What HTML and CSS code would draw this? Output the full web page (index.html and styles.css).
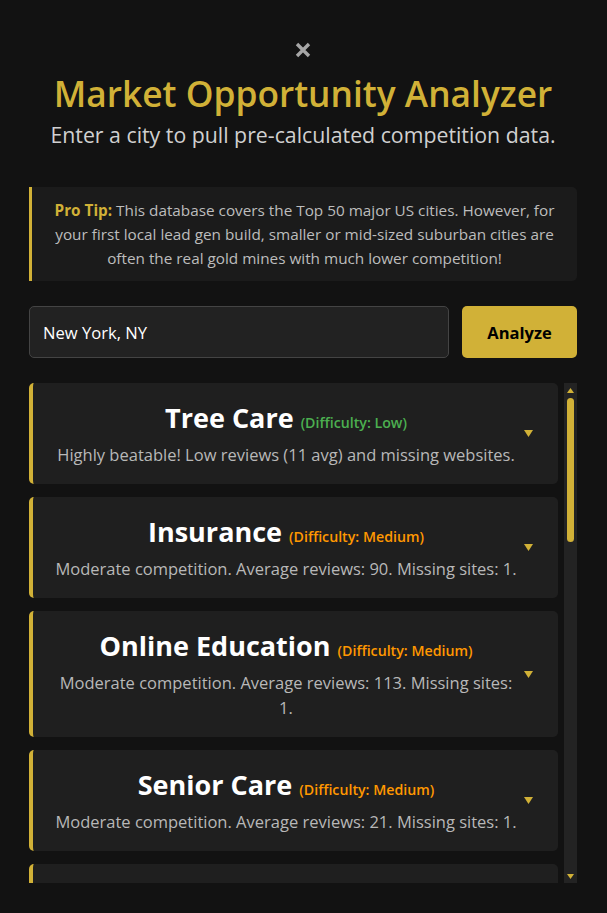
FILE: index.html
```html
<!DOCTYPE html>
<html lang="en">
<head>
<meta charset="utf-8">
<title>Market Opportunity Analyzer</title>
<link rel="stylesheet" href="styles.css">
</head>
<body>
<div class="modal">
  <button class="close" aria-label="Close">
    <svg viewBox="0 0 16 16" width="16" height="16"><path d="M2 2 L14 14 M14 2 L2 14" stroke="#a6a6a6" stroke-width="3.4" fill="none"/></svg>
  </button>
  <h1 class="title">Market Opportunity Analyzer</h1>
  <p class="subtitle">Enter a city to pull pre-calculated competition data.</p>

  <div class="tip">
    <strong class="tip-label">Pro Tip:</strong> This database covers the Top 50 major US cities. However, for your first local lead gen build, smaller or mid-sized suburban cities are often the real gold mines with much lower competition!
  </div>

  <div class="search">
    <input class="city-input" type="text" value="New York, NY">
    <button class="analyze">Analyze</button>
  </div>

  <div class="results-wrap">
    <div class="results">
      <div class="card">
        <div class="card-body">
          <h3 class="niche">Tree Care <span class="diff low">(Difficulty: Low)</span></h3>
          <p class="desc">Highly beatable! Low reviews (11 avg) and missing websites.</p>
        </div>
        <svg class="arrow" viewBox="0 0 9 7" width="9" height="7"><polygon points="0,0 9,0 4.5,7" fill="#d1b137"/></svg>
      </div>
      <div class="card">
        <div class="card-body">
          <h3 class="niche">Insurance <span class="diff medium">(Difficulty: Medium)</span></h3>
          <p class="desc">Moderate competition. Average reviews: 90. Missing sites: 1.</p>
        </div>
        <svg class="arrow" viewBox="0 0 9 7" width="9" height="7"><polygon points="0,0 9,0 4.5,7" fill="#d1b137"/></svg>
      </div>
      <div class="card">
        <div class="card-body">
          <h3 class="niche">Online Education <span class="diff medium">(Difficulty: Medium)</span></h3>
          <p class="desc">Moderate competition. Average reviews: 113. Missing sites: 1.</p>
        </div>
        <svg class="arrow" viewBox="0 0 9 7" width="9" height="7"><polygon points="0,0 9,0 4.5,7" fill="#d1b137"/></svg>
      </div>
      <div class="card">
        <div class="card-body">
          <h3 class="niche">Senior Care <span class="diff medium">(Difficulty: Medium)</span></h3>
          <p class="desc">Moderate competition. Average reviews: 21. Missing sites: 1.</p>
        </div>
        <svg class="arrow" viewBox="0 0 9 7" width="9" height="7"><polygon points="0,0 9,0 4.5,7" fill="#d1b137"/></svg>
      </div>
      <div class="card">
        <div class="card-body">
          <h3 class="niche">Pest Control <span class="diff medium">(Difficulty: Medium)</span></h3>
          <p class="desc">Moderate competition. Average reviews: 64. Missing sites: 2.</p>
        </div>
        <svg class="arrow" viewBox="0 0 9 7" width="9" height="7"><polygon points="0,0 9,0 4.5,7" fill="#d1b137"/></svg>
      </div>
      <div class="card">
        <div class="card-body">
          <h3 class="niche">Pool Cleaning <span class="diff low">(Difficulty: Low)</span></h3>
          <p class="desc">Highly beatable! Low reviews (18 avg) and missing websites.</p>
        </div>
        <svg class="arrow" viewBox="0 0 9 7" width="9" height="7"><polygon points="0,0 9,0 4.5,7" fill="#d1b137"/></svg>
      </div>
      <div class="card">
        <div class="card-body">
          <h3 class="niche">Roofing <span class="diff medium">(Difficulty: Medium)</span></h3>
          <p class="desc">Moderate competition. Average reviews: 87. Missing sites: 1.</p>
        </div>
        <svg class="arrow" viewBox="0 0 9 7" width="9" height="7"><polygon points="0,0 9,0 4.5,7" fill="#d1b137"/></svg>
      </div>
      <div class="card">
        <div class="card-body">
          <h3 class="niche">Landscaping <span class="diff low">(Difficulty: Low)</span></h3>
          <p class="desc">Highly beatable! Low reviews (24 avg) and missing websites.</p>
        </div>
        <svg class="arrow" viewBox="0 0 9 7" width="9" height="7"><polygon points="0,0 9,0 4.5,7" fill="#d1b137"/></svg>
      </div>
      <div class="card">
        <div class="card-body">
          <h3 class="niche">Plumbing <span class="diff medium">(Difficulty: Medium)</span></h3>
          <p class="desc">Moderate competition. Average reviews: 95. Missing sites: 1.</p>
        </div>
        <svg class="arrow" viewBox="0 0 9 7" width="9" height="7"><polygon points="0,0 9,0 4.5,7" fill="#d1b137"/></svg>
      </div>
      <div class="card">
        <div class="card-body">
          <h3 class="niche">Junk Removal <span class="diff low">(Difficulty: Low)</span></h3>
          <p class="desc">Highly beatable! Low reviews (15 avg) and missing websites.</p>
        </div>
        <svg class="arrow" viewBox="0 0 9 7" width="9" height="7"><polygon points="0,0 9,0 4.5,7" fill="#d1b137"/></svg>
      </div>
      <div class="card">
        <div class="card-body">
          <h3 class="niche">Electricians <span class="diff medium">(Difficulty: Medium)</span></h3>
          <p class="desc">Moderate competition. Average reviews: 72. Missing sites: 2.</p>
        </div>
        <svg class="arrow" viewBox="0 0 9 7" width="9" height="7"><polygon points="0,0 9,0 4.5,7" fill="#d1b137"/></svg>
      </div>
      <div class="card">
        <div class="card-body">
          <h3 class="niche">Window Cleaning <span class="diff low">(Difficulty: Low)</span></h3>
          <p class="desc">Highly beatable! Low reviews (9 avg) and missing websites.</p>
        </div>
        <svg class="arrow" viewBox="0 0 9 7" width="9" height="7"><polygon points="0,0 9,0 4.5,7" fill="#d1b137"/></svg>
      </div>
      <div class="card">
        <div class="card-body">
          <h3 class="niche">Dentists <span class="diff medium">(Difficulty: Medium)</span></h3>
          <p class="desc">Moderate competition. Average reviews: 140. Missing sites: 0.</p>
        </div>
        <svg class="arrow" viewBox="0 0 9 7" width="9" height="7"><polygon points="0,0 9,0 4.5,7" fill="#d1b137"/></svg>
      </div>
      <div class="card">
        <div class="card-body">
          <h3 class="niche">Moving Services <span class="diff medium">(Difficulty: Medium)</span></h3>
          <p class="desc">Moderate competition. Average reviews: 58. Missing sites: 1.</p>
        </div>
        <svg class="arrow" viewBox="0 0 9 7" width="9" height="7"><polygon points="0,0 9,0 4.5,7" fill="#d1b137"/></svg>
      </div>
    </div>
    <div class="rail" aria-hidden="true">
      <div class="rail-btn rail-btn-up">
        <svg viewBox="0 0 7 5" width="7" height="5"><polygon points="3.5,0 7,5 0,5" fill="#d1b137"/></svg>
      </div>
      <div class="rail-track">
        <div class="rail-thumb"></div>
      </div>
      <div class="rail-btn rail-btn-down">
        <svg viewBox="0 0 7 5" width="7" height="5"><polygon points="0,0 7,0 3.5,5" fill="#d1b137"/></svg>
      </div>
    </div>
  </div>
</div>
</body>
</html>
```

FILE: styles.css
```css
html, body {
  margin: 0;
  padding: 0;
  background: #121212;
}

body {
  font-family: "Open Sans", "Noto Sans", sans-serif;
  color: #e0e0e0;
}

.modal {
  padding: 42px 30px 20px 29px;
  box-sizing: border-box;
}

.close {
  display: block;
  margin: 0 auto;
  padding: 0;
  width: 16px;
  height: 16px;
  border: none;
  background: none;
  line-height: 0;
}

.title {
  margin: 12px 0 0;
  font-size: 35.3px;
  line-height: 46px;
  font-weight: 600;
  color: #d1b137;
  text-align: center;
}

.subtitle {
  margin: 5px 0 0;
  font-size: 21.3px;
  line-height: 28px;
  color: #d0d0d0;
  text-align: center;
}

.tip {
  margin-top: 38px;
  padding: 11px 20px;
  background: #1b1b1b;
  border-left: 3px solid #d1b137;
  border-radius: 0 5px 5px 0;
  font-size: 15.3px;
  line-height: 24px;
  color: #bdbdbd;
  text-align: center;
}

.tip-label {
  color: #d1b137;
  font-weight: 700;
}

.search {
  display: flex;
  gap: 13px;
  margin-top: 25px;
  height: 52px;
}

.city-input {
  flex: 1;
  min-width: 0;
  box-sizing: border-box;
  height: 52px;
  padding: 0 13px;
  background: #222222;
  border: 1px solid #444444;
  border-radius: 5px;
  color: #ffffff;
  font-family: inherit;
  font-size: 16.6px;
  outline: none;
}

.analyze {
  width: 115px;
  height: 52px;
  border: none;
  border-radius: 5px;
  background: #d1b137;
  color: #000000;
  font-family: inherit;
  font-size: 16.5px;
  font-weight: 700;
}

.results-wrap {
  display: flex;
  gap: 6px;
  margin-top: 25px;
  height: 500px;
}

.results {
  flex: 1;
  min-width: 0;
  overflow-y: auto;
  scrollbar-width: none;
  display: flex;
  flex-direction: column;
  gap: 13px;
}

.results::-webkit-scrollbar {
  display: none;
}

.rail {
  flex: none;
  width: 13px;
  display: flex;
  flex-direction: column;
  background: #232323;
}

.rail-btn {
  display: flex;
  align-items: center;
  justify-content: center;
  height: 13px;
}

.rail-btn-up {
  height: 15px;
}

.rail-track {
  flex: 1;
  display: flex;
  justify-content: center;
}

.rail-thumb {
  width: 7px;
  height: 144px;
  border-radius: 4px;
  background: #d1b137;
}

.card {
  flex: none;
  display: flex;
  align-items: center;
  padding: 17px 25px 17px 20px;
  background: #1f1f1f;
  border-left: 4px solid #d1b137;
  border-radius: 5px;
}

.card-body {
  flex: 1;
  min-width: 0;
  text-align: center;
}

.niche {
  margin: 0 0 6px;
  font-size: 27px;
  line-height: 36px;
  font-weight: 700;
  color: #ffffff;
}

.diff {
  font-size: 14.2px;
  line-height: 1;
  font-weight: 600;
}

.diff.low {
  color: #4caf50;
}

.diff.medium {
  color: #ff9800;
}

.desc {
  margin: 0;
  font-size: 16.5px;
  line-height: 25px;
  color: #b8b8b8;
}

.arrow {
  flex: none;
  margin-left: 5px;
  width: 9px;
  height: 7px;
}
```
